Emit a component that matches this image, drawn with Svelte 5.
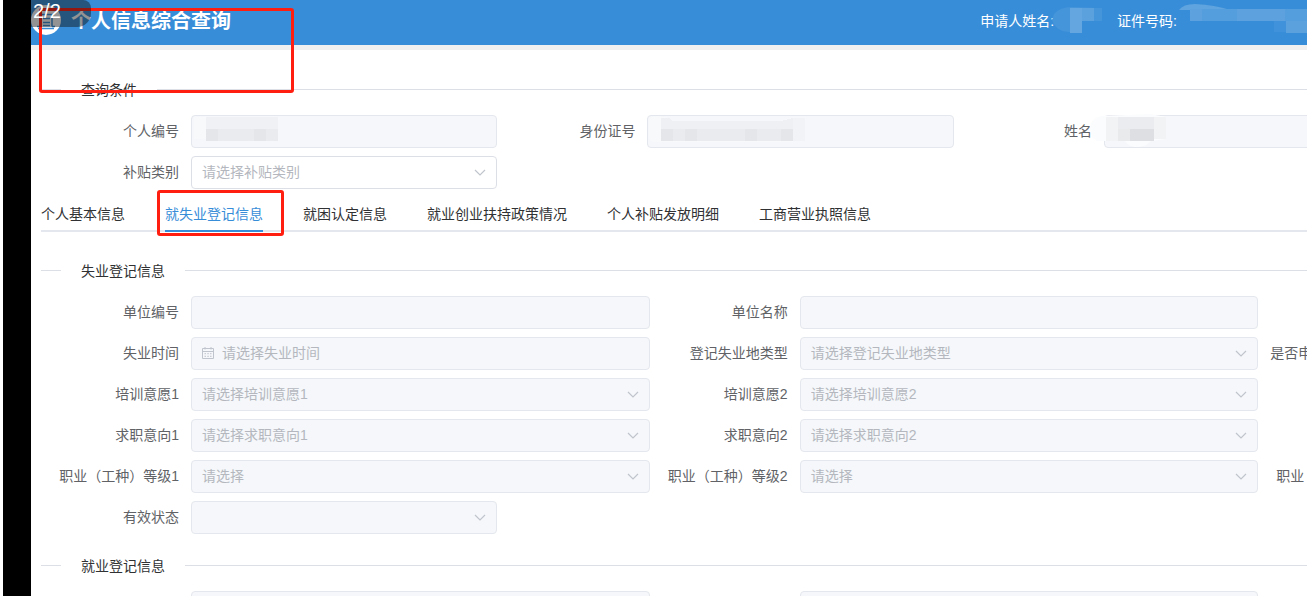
<script>
  const queryFields = [
    { id: 'person-no', label: '个人编号', kind: 'text', mask: 'short' },
    { id: 'id-card', label: '身份证号', kind: 'text', mask: 'long' },
    { id: 'name', label: '姓名', kind: 'text', mask: 'name' },
    { id: 'subsidy', label: '补贴类别', kind: 'select', hint: '请选择补贴类别', open: true }
  ];
  const tabs = ['个人基本信息', '就失业登记信息', '就困认定信息', '就业创业扶持政策情况', '个人补贴发放明细', '工商营业执照信息'];
  let active = $state(1);
  const rows = [
    [
      { id: 'unit-no', label: '单位编号', kind: 'text' },
      { id: 'unit-name', label: '单位名称', kind: 'text' }
    ],
    [
      { id: 'lost-date', label: '失业时间', kind: 'date', hint: '请选择失业时间' },
      { id: 'lost-place', label: '登记失业地类型', kind: 'select', hint: '请选择登记失业地类型' },
      { id: 'applied', label: '是否申', kind: 'text', cut: 'near' }
    ],
    [
      { id: 'train-1', label: '培训意愿1', kind: 'select', hint: '请选择培训意愿1' },
      { id: 'train-2', label: '培训意愿2', kind: 'select', hint: '请选择培训意愿2' }
    ],
    [
      { id: 'job-1', label: '求职意向1', kind: 'select', hint: '请选择求职意向1' },
      { id: 'job-2', label: '求职意向2', kind: 'select', hint: '请选择求职意向2' }
    ],
    [
      { id: 'level-1', label: '职业（工种）等级1', kind: 'select', hint: '请选择' },
      { id: 'level-2', label: '职业（工种）等级2', kind: 'select', hint: '请选择' },
      { id: 'level-3', label: '职业', kind: 'text', cut: 'far' }
    ]
  ];
</script>

{#snippet field(f)}
  <div class="field" class:first={f.open}>
    <label for={f.id} class={f.cut ?? ''}>{f.label}</label>
    <div class="control">
      {#if f.kind === 'select'}
        <select id={f.id} disabled={!f.open}><option>{f.hint ?? ''}</option></select>
        <svg class="arrow" width="12" height="8" viewBox="0 0 12 8" aria-hidden="true"><path d="M1 1l5 5 5-5" /></svg>
      {:else}
        <input id={f.id} class:dated={f.kind === 'date'} type="text" placeholder={f.hint ?? ''} disabled />
        {#if f.kind === 'date'}
          <svg class="calendar" width="14" height="14" viewBox="0 0 14 14" aria-hidden="true">
            <path d="M1.500 2.500h11v10h-11zM1.500 5.500h11M4 1v2.500M10 1v2.500M3.500 7.700h1.500M6.300 7.700h1.500M9 7.700h1.500M3.500 10.300h1.500M6.300 10.300h1.500M9 10.300h1.500" />
          </svg>
        {/if}
      {/if}
      {#if f.mask === 'short'}
        <svg class="mask" width="100" height="33" aria-hidden="true" shape-rendering="crispEdges">
          <path d="M3 2h12v22H3z" fill="#f7f9fb" />
          <path d="M15 2h72v12H15z" fill="#eff1f4" />
          <path d="M15 14h72v12H15z" fill="#e9ebee" />
          <path d="M15 14h12v12H15zM63 14h12v12H63z" fill="#e4e6ea" />
        </svg>
      {:else if f.mask === 'long'}
        <svg class="mask" width="170" height="33" aria-hidden="true">
          <path d="M2 5Q2 1 10 1l8 1 8 4h106l14-3v24H6Q2 26 2 20z" fill="#f7f9fb" />
          <g shape-rendering="crispEdges">
            <path d="M14 3h8l4 3h108l12-3v11H14z" fill="#eef0f3" />
            <path d="M14 14h132v12H14z" fill="#e9ebef" />
            <path d="M14 14h12v12H14zM38 14h12v12H38zM98 14h12v12H98zM134 14h12v12h-12z" fill="#e4e6e9" />
            <path d="M146 3h12v23h-12z" fill="#f1f3f6" />
          </g>
        </svg>
      {:else if f.mask === 'name'}
        <svg class="mask over-label" width="80" height="36" aria-hidden="true">
          <path d="M0 12Q2 2 12 1l48-2 16 3v22l-15 2q-5 6-14 6-8 0-12-6H8Q0 24 0 12z" fill="#fbfcfd" />
          <g shape-rendering="crispEdges">
            <path d="M16 2h24v24H16zM64 2h12v22H64z" fill="#f1f3f5" />
            <path d="M28 2h36v12H28z" fill="#eaecef" />
            <path d="M28 14h12v12H28z" fill="#e8eaec" />
            <path d="M40 14h24v12H40z" fill="#dedfe3" />
          </g>
        </svg>
      {/if}
    </div>
  </div>
{/snippet}

<div class="page">
  <div class="edge"></div>
  <div class="app">
    <header>
      <div class="brand">
        <svg width="30" height="30" viewBox="0 0 30 30" aria-hidden="true">
          <circle cx="15" cy="15" r="15" fill="#fff" />
          <path d="M9 21.500V9.500h12v12M6 21.500h3M21 21.500h3M7 23.500h16M12 13.500h7M12 17.500h7M12 20.500h7" fill="none" stroke="#388dd8" stroke-width="1.500" />
        </svg>
        <h1>个人信息综合查询</h1>
      </div>
      <div class="applicant"><span>申请人姓名:</span><span>证件号码:</span></div>
      <svg class="header-mask" width="257" height="45" aria-hidden="true">
        <path d="M4 14Q10 7 22 7l24 1h6v13H32v11H20Q6 32 2 20z" fill="#4595da" />
        <path d="M20 8h24v13H32v12H20z" fill="#64a7e0" />
        <path d="M32 8h12v13H32z" fill="#5aa1de" />
        <path d="M129 10Q133 4 145 4q20 1 35 6l-2 11h-38V10z" fill="#5fa4df" />
        <path d="M140 9h117v12H140z" fill="#559edd" />
        <path d="M140 9h12v12h-12zM187 9h48v12h-48z" fill="#5da2df" />
        <path d="M224 21h12v11h-12z" fill="#4093da" />
        <path d="M236 21h21v12h-21z" fill="#5aa1de" />
      </svg>
      <div class="frame"></div>
      <span class="counter">2/2</span>
    </header>
    <main>
      <section>
        <h2><span>查询条件</span></h2>
        <form class="grid four">
          {#each queryFields as f (f.id)}{@render field(f)}{/each}
        </form>
      </section>
      <nav>
        {#each tabs as tab, i (tab)}
          <button type="button" class:active={active === i} onclick={() => (active = i)}>
            <span>{tab}</span>
          </button>
        {/each}
      </nav>
      <section class="unemployed">
        <h2><span>失业登记信息</span></h2>
        <div class="stack">
          {#each rows as row}
            <div class="grid three">
              {#each row as f (f.id)}{@render field(f)}{/each}
            </div>
          {/each}
          <div class="grid four">{@render field({ id: 'state', label: '有效状态', kind: 'select' })}</div>
        </div>
      </section>
      <section class="employed">
        <h2><span>就业登记信息</span></h2>
        <div class="grid three">
          {@render field({ id: 'work-a', label: '', kind: 'text' })}
          {@render field({ id: 'work-b', label: '', kind: 'text' })}
        </div>
      </section>
    </main>
  </div>
</div>

<style>
  :global(body) { background: #fff; overflow: hidden; }
  .page {
    display: flex;
    height: 100vh;
    overflow: hidden;
    padding-left: 3px;
    color: #303133;
    font: 14px/20px "Liberation Sans", "Noto Sans CJK SC", sans-serif;
  }
  .edge { flex: 0 0 28px; background: #000; }
  .app { flex: 1; min-width: 0; }
  header {
    position: relative;
    display: flex;
    justify-content: space-between;
    height: 45px;
    border-bottom: 5px solid #f0f0f0;
    background: #388dd8;
    color: #fff;
  }
  .brand { display: flex; align-items: center; gap: 10px; height: 40px; }
  h1 { margin: 0; font-size: 20px; line-height: 40px; padding-top: 2px; }
  .applicant { display: flex; gap: 63px; padding-right: 130px; line-height: 42px; white-space: nowrap; }
  .header-mask { position: absolute; right: 0; top: 0; }
  .frame {
    position: absolute;
    z-index: 2;
    left: 8px;
    top: 8px;
    width: 255px;
    height: 85px;
    box-sizing: border-box;
    border: 3px solid #ff1e10;
    border-radius: 3px;
  }
  .counter {
    position: absolute;
    z-index: 3;
    left: 0;
    top: 0;
    width: 60px;
    height: 27px;
    box-sizing: border-box;
    padding-left: 2px;
    border-radius: 0 8px 14px 0;
    background: rgba(16, 16, 16, 0.45);
    font-size: 20px;
    line-height: 22px;
  }
  main { box-sizing: content-box; width: 143.1%; padding: 30px 10px 0; }
  h2 {
    display: flex;
    align-items: center;
    gap: 20px;
    margin: 0 0 15px;
    font-size: 14px;
    font-weight: 400;
    line-height: 20px;
  }
  h2::before, h2::after { content: ""; flex: 0 0 20px; height: 1px; margin-bottom: 2px; background: #dcdfe6; }
  h2::after { flex: 1; }
  .grid { display: grid; row-gap: 8px; }
  .four { grid-template-columns: repeat(4, 1fr); }
  .three { grid-template-columns: repeat(3, 1fr); }
  .stack { display: grid; gap: 8px; }
  .field { display: flex; min-width: 0; height: 33px; }
  .first { grid-column: 1; }
  label {
    flex: 0 0 150px;
    box-sizing: border-box;
    padding-right: 12px;
    color: #606266;
    line-height: 33px;
    text-align: right;
    white-space: nowrap;
  }
  label.near { padding-left: 12px; text-align: left; }
  label.far { padding-left: 18px; text-align: left; }
  .control { position: relative; flex: 1; min-width: 0; }
  input, select {
    display: block;
    box-sizing: border-box;
    width: 100%;
    height: 33px;
    margin: 0;
    padding: 0 30px 2px 10px;
    border: 1px solid #dcdfe6;
    border-radius: 4px;
    background: #fff;
    color: #b4b7be;
    font: inherit;
    appearance: none;
    opacity: 1;
  }
  input:disabled, select:disabled { border-color: #e4e7ed; background: #f5f7fa; }
  input::placeholder { color: #b4b7be; opacity: 1; }
  .dated { padding-left: 30px; }
  .arrow, .calendar { position: absolute; fill: none; stroke: #c0c4cc; pointer-events: none; }
  .arrow { right: 11px; top: 13px; stroke-width: 1.2; }
  .calendar { left: 10px; top: 9px; }
  .mask { position: absolute; left: 0; top: 0; overflow: visible; }
  .over-label { left: -14px; }
  nav { display: flex; gap: 40px; margin-top: 9px; border-bottom: 2px solid #e4e7ed; }
  nav button {
    position: relative;
    height: 32px;
    padding: 0;
    border: 0;
    background: none;
    color: #303133;
    font: inherit;
    line-height: 32px;
    white-space: nowrap;
  }
  nav .active { color: #388dd8; }
  nav .active span { display: block; height: 32px; border-bottom: 2px solid #388dd8; }
  nav .active::after {
    content: "";
    position: absolute;
    left: -8px;
    right: -21px;
    top: -8px;
    height: 40px;
    border: 3px solid #ff1e10;
    border-radius: 3px;
  }
  .unemployed { margin-top: 29px; }
  .employed { margin-top: 22px; }
</style>
